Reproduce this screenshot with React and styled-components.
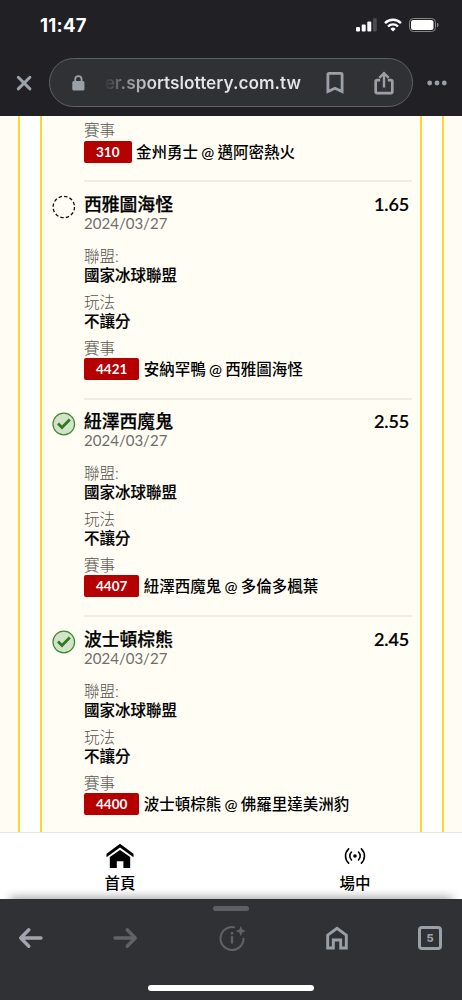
import React from "react";
import styled, { createGlobalStyle, css } from "styled-components";

const Global = createGlobalStyle`
  *, *::before, *::after { box-sizing: border-box; }
  html, body { margin: 0; padding: 0; }
  body {
    font-family: Lato, "Noto Sans CJK TC", sans-serif;
    background: #303134;
    color: #000;
  }
`;

const Screen = styled.div`
  width: 462px;
  height: 1000px;
  display: flex;
  flex-direction: column;
  overflow: hidden;
`;

const TopChrome = styled.header`
  height: 116px;
  flex: none;
  background: #202025;
  font-family: Inter, sans-serif;
`;

const StatusBar = styled.div`
  height: 50px;
  padding: 0 23px 0 40px;
  display: flex;
  align-items: center;
  justify-content: space-between;
`;

const Clock = styled.span`
  color: #fff;
  font-size: 18.5px;
  font-weight: 700;
  letter-spacing: 0.25px;
`;

const StatusIcons = styled.div`
  display: flex;
  align-items: center;
  gap: 7px;
`;

const AddressRow = styled.div`
  height: 66px;
  padding: 8px 14px 0 15px;
  display: flex;
  align-items: flex-start;
`;

const CloseSlot = styled.div`
  width: 34px;
  height: 49px;
  display: flex;
  align-items: center;
`;

const AddressPill = styled.div`
  width: 364px;
  height: 49px;
  border: 1px solid #606166;
  border-radius: 25px;
  background: #303134;
  display: flex;
  align-items: center;
  padding: 0 18px 0 22px;
`;

const Url = styled.span`
  width: 200px;
  margin-left: 17px;
  font-size: 17.3px;
  font-weight: 600;
  line-height: 24px;
  text-align: right;
  white-space: nowrap;
  color: transparent;
  background: linear-gradient(to right, #303134 0, #47484b 8px, #8b8c90 24px, #e2e4e8 56px);
  background-clip: text;
  -webkit-background-clip: text;
`;

const PillActions = styled.div`
  display: flex;
  align-items: center;
  margin-left: 25px;
  gap: 30px;
`;

const MoreSlot = styled.div`
  height: 49px;
  margin-left: 14px;
  display: flex;
  align-items: center;
`;

const Page = styled.main`
  height: 716px;
  flex: none;
  display: flex;
  background: #fff;
  overflow: hidden;
`;

const Gutter = styled.div`
  width: 20px;
  flex: none;
  background: #fffcf3;
  border: 0 solid #fdd630;
  border-width: ${(p) => (p.$right ? "0 0 0 2px" : "0 2px 0 0")};
`;

const Ticket = styled.section`
  width: 382px;
  margin: 0 20px;
  flex: none;
  background: #fffdf4;
  border: 0 solid #fdd630;
  border-width: 0 2px;
  padding-right: 8px;
`;

const Leg = styled.article`
  height: ${(p) => (p.$continued ? "64.3px" : "217.5px")};
  display: flex;
`;

const Marker = styled.div`
  width: 42px;
  flex: none;
  padding: 14.5px 0 0 10px;
`;

const LegBody = styled.div`
  flex: 1;
  border-top: ${(p) => (p.$continued ? "0" : "2px solid #efede6")};
  padding-top: ${(p) => (p.$continued ? "5px" : "11.5px")};
`;

const TitleRow = styled.div`
  display: flex;
  justify-content: space-between;
  height: 20px;
  line-height: 20px;
  padding-right: 3px;
`;

const Pick = styled.span`
  font-size: 17.8px;
  font-weight: 500;
  -webkit-text-stroke: 0.25px #000;
`;

const Odds = styled.span`
  font-size: 18px;
  font-weight: 600;
  letter-spacing: -0.15px;
  -webkit-text-stroke: 0.15px #000;
`;

const DateLine = styled.div`
  height: 18px;
  line-height: 18px;
  font-size: 15px;
  letter-spacing: 0.02px;
  color: #6f6e6b;
  margin-bottom: 15.2px;
`;

const Field = styled.div`
  margin-bottom: 8px;
`;

const fieldLine = css`
  height: 19px;
  line-height: 19px;
  font-size: 15.5px;
`;

const FieldLabel = styled.div`
  ${fieldLine}
  font-weight: 300;
  color: #55534f;
`;

const FieldValue = styled.div`
  ${fieldLine}
  font-weight: 500;
  -webkit-text-stroke: 0.15px #000;
`;

const MatchRow = styled.div`
  display: flex;
  align-items: center;
  height: 22px;
  line-height: 22px;
  margin-top: ${(p) => (p.$continued ? "0.7px" : "0")};
  font-size: 15.5px;
  font-weight: 500;
  white-space: nowrap;
  word-spacing: -0.7px;
`;

const Code = styled.span`
  height: 22px;
  padding: 0 12px;
  margin-right: 4.5px;
  border-radius: 2px;
  background: #b40000;
  color: #fff;
  font-size: 13.5px;
  font-weight: 700;
`;

const SiteNav = styled.nav`
  position: relative;
  height: 67px;
  flex: none;
  border-top: 1px solid #e6e5e4;
  background: #fff;
  display: grid;
  grid-template-columns: 240px 230px;

  &::after {
    content: "";
    position: absolute;
    left: 10px;
    right: 10px;
    bottom: -6px;
    height: 6px;
    box-shadow: 0 -1px 10px rgba(0, 0, 0, 0.5);
  }
`;

const SiteTab = styled.a`
  display: flex;
  flex-direction: column;
  align-items: center;
  font-size: 15.5px;
  font-weight: 500;
`;

const TabIcon = styled.div`
  height: 39px;
  padding-top: ${(p) => p.$drop || 0}px;
  svg { display: block; }
`;

const TabText = styled.span`
  line-height: 22px;
`;

const BottomChrome = styled.footer`
  position: relative;
  height: 101px;
  flex: none;
  background: #303134;
  font-family: Inter, sans-serif;
  display: flex;
  flex-direction: column;
  align-items: center;
`;

const Grabber = styled.div`
  width: 36px;
  height: 5px;
  margin-top: 7px;
  border-radius: 3px;
  background: #5d5f64;
`;

const ToolRow = styled.div`
  width: 462px;
  height: 53px;
  display: grid;
  grid-template-columns: 62px 126px 88px 122px 64px;
  align-items: center;
  justify-items: center;
`;

const TabCount = styled.div`
  width: 24px;
  height: 24px;
  border: 3px solid #9aa0a8;
  border-radius: 4px;
  color: #9aa0a8;
  font-size: 11px;
  font-weight: 800;
  display: flex;
  align-items: center;
  justify-content: center;
`;

const HomeIndicator = styled.div`
  width: 166px;
  height: 6px;
  margin-top: 21px;
  border-radius: 3px;
  background: #fff;
`;

const Signal = () => (
  <svg width="21" height="14" viewBox="0 0 21 14">
    <rect x="0" y="9" width="4" height="4.5" rx="1" fill="#fff" />
    <rect x="5.7" y="6.5" width="4" height="7" rx="1" fill="#fff" />
    <rect x="11.3" y="3.5" width="4" height="10" rx="1" fill="#fff" />
    <rect x="17" y="0.3" width="3.8" height="13.2" rx="1" fill="#4b4b50" />
  </svg>
);

const Wifi = () => (
  <svg width="18" height="14" viewBox="0 0 18 14" fill="none" stroke="#fff" strokeWidth="2.4">
    <path d="M1 5.1a11.3 11.3 0 0 1 16 0" />
    <path d="M4 8.5a7 7 0 0 1 10 0" />
    <path d="M9 13.5 6.4 10.9a3.7 3.7 0 0 1 5.2 0z" fill="#fff" stroke="none" />
  </svg>
);

const Battery = () => (
  <svg width="30" height="14" viewBox="0 0 30 14">
    <rect x="0.5" y="0.5" width="26" height="13" rx="4" fill="none" stroke="#86868a" />
    <rect x="2" y="2" width="22.5" height="10" rx="2.5" fill="#fff" />
    <path d="M28 4.8v4.4c1-.3 1.5-1.2 1.5-2.2s-.5-1.9-1.5-2.2z" fill="#86868a" />
  </svg>
);

const Close = () => (
  <svg width="18" height="18" viewBox="0 0 18 18" stroke="#9da1a9" strokeWidth="3" strokeLinecap="round">
    <path d="M3.3 3.3l11.6 11.6M14.9 3.3L3.3 14.9" />
  </svg>
);

const Lock = () => (
  <svg width="13" height="16" viewBox="0 0 13 16">
    <path d="M3.2 7V4.2a3.2 3.2 0 0 1 6.4 0V7" fill="none" stroke="#9aa0a8" strokeWidth="1.8" />
    <rect x="0.3" y="6" width="12.2" height="9.6" rx="1.6" fill="#9aa0a8" />
  </svg>
);

const Bookmark = () => (
  <svg width="18" height="24" viewBox="0 0 18 24" fill="none" stroke="#9aa0a8" strokeWidth="2.8">
    <path d="M1.9 20.6V3.4q0-1 1-1h12.2q1 0 1 1v17.2L9 17.3z" />
  </svg>
);

const Share = () => (
  <svg width="20" height="24" viewBox="0 0 20 24" fill="none" stroke="#9aa0a8" strokeWidth="2.7">
    <path d="M6.2 9.1H3.2q-1.5 0-1.5 1.5v10q0 1.5 1.5 1.5h13.6q1.5 0 1.5-1.5v-10q0-1.5-1.5-1.5h-3" />
    <path d="M10 16.5V3.5M5.3 6.8L10 2.2l4.7 4.6" strokeWidth="2.4" />
  </svg>
);

const More = () => (
  <svg width="20" height="6" viewBox="0 0 20 6" fill="#9aa0a8">
    <circle cx="2.7" cy="3" r="2.4" />
    <circle cx="10" cy="3" r="2.4" />
    <circle cx="17.3" cy="3" r="2.4" />
  </svg>
);

const Pending = () => (
  <svg width="24" height="24" viewBox="0 0 24 24">
    <circle cx="11.8" cy="12" r="10.7" fill="none" stroke="#111" strokeWidth="1.3" strokeDasharray="3.4 2.2" />
  </svg>
);

const Won = () => (
  <svg width="24" height="24" viewBox="0 0 24 24">
    <circle cx="11.8" cy="12" r="10.8" fill="#d3e3c8" stroke="#3f8536" strokeWidth="1.2" />
    <path d="M6 11.6l4 3.9 7.8-7.9" fill="none" stroke="#2c7b20" strokeWidth="2.8" />
  </svg>
);

const HomeSolid = () => (
  <svg width="28" height="26" viewBox="0 0 28 26">
    <path d="M.5 14.2V10.8L14 .8l13.5 10v3.4L14 4.6z" />
    <path d="M3.8 14L14 6.9 24.2 14v11h-6.8v-6.8h-6.6V25h-7z" />
  </svg>
);

const Live = () => (
  <svg width="22" height="18" viewBox="0 0 22 18" fill="none" stroke="#000" strokeWidth="1.6" strokeLinecap="round">
    <circle cx="11" cy="9" r="1.8" fill="#000" stroke="none" />
    <path d="M7.5 5a5.6 5.6 0 0 0 0 8M14.5 5a5.6 5.6 0 0 1 0 8" />
    <path d="M4.6 1.8a10 10 0 0 0 0 14.4M17.4 1.8a10 10 0 0 1 0 14.4" />
  </svg>
);

const Arrow = ({ forward }) => (
  <svg width="26" height="24" viewBox="0 0 26 24" fill="none" stroke={forward ? "#606267" : "#a1a6ae"} strokeWidth="3.4" strokeLinecap="round" strokeLinejoin="round">
    <path d={forward ? "M3 12h20M15.2 3.8L23.3 12l-8.1 8.2" : "M23 12H3M10.8 3.8L2.7 12l8.1 8.2"} />
  </svg>
);

const InfoSpark = () => (
  <svg width="28" height="28" viewBox="0 0 28 28" fill="none" stroke="#606267" strokeWidth="2">
    <path d="M17 3.4A11.5 11.5 0 1 0 25.5 14" />
    <path d="M14 12.2v7.3" strokeWidth="2.4" />
    <path d="M14 8v2.5" strokeWidth="2.4" />
    <path d="M22.8 2l1.5 3.5L27.8 7l-3.5 1.5-1.5 3.5-1.5-3.5L17.8 7l3.5-1.5z" fill="#606267" stroke="none" />
  </svg>
);

const HomeOutline = () => (
  <svg width="22" height="24" viewBox="0 0 22 24" fill="none" stroke="#9aa0a8" strokeWidth="2.9">
    <path d="M1.7 22V9.2L11 2.3l9.3 6.9V22h-5.6v-8H7.3v8z" />
  </svg>
);

const legs = [
  { code: "310", match: "金州勇士 @ 邁阿密熱火", continued: true },
  { code: "4421", match: "安納罕鴨 @ 西雅圖海怪", pick: "西雅圖海怪", odds: "1.65" },
  { code: "4407", match: "紐澤西魔鬼 @ 多倫多楓葉", pick: "紐澤西魔鬼", odds: "2.55", won: true },
  { code: "4400", match: "波士頓棕熊 @ 佛羅里達美洲豹", pick: "波士頓棕熊", odds: "2.45", won: true },
];

function BetLeg({ code, match, pick, odds, won, continued }) {
  return (
    <Leg $continued={continued}>
      <Marker>{!continued && (won ? <Won /> : <Pending />)}</Marker>
      <LegBody $continued={continued}>
        {!continued && (
          <>
            <TitleRow>
              <Pick>{pick}</Pick>
              <Odds>{odds}</Odds>
            </TitleRow>
            <DateLine>2024/03/27</DateLine>
            <Field>
              <FieldLabel>聯盟:</FieldLabel>
              <FieldValue>國家冰球聯盟</FieldValue>
            </Field>
            <Field>
              <FieldLabel>玩法</FieldLabel>
              <FieldValue>不讓分</FieldValue>
            </Field>
          </>
        )}
        <FieldLabel>賽事</FieldLabel>
        <MatchRow $continued={continued}>
          <Code>{code}</Code>
          {match}
        </MatchRow>
      </LegBody>
    </Leg>
  );
}

export default function App() {
  return (
    <>
      <Global />
      <Screen>
        <TopChrome>
          <StatusBar>
            <Clock>11:47</Clock>
            <StatusIcons>
              <Signal />
              <Wifi />
              <Battery />
            </StatusIcons>
          </StatusBar>
          <AddressRow>
            <CloseSlot><Close /></CloseSlot>
            <AddressPill>
              <Lock />
              <Url>er.sportslottery.com.tw</Url>
              <PillActions>
                <Bookmark />
                <Share />
              </PillActions>
            </AddressPill>
            <MoreSlot><More /></MoreSlot>
          </AddressRow>
        </TopChrome>
        <Page>
          <Gutter />
          <Ticket>
            {legs.map((leg) => <BetLeg key={leg.code} {...leg} />)}
          </Ticket>
          <Gutter $right />
        </Page>
        <SiteNav>
          <SiteTab>
            <TabIcon $drop={10}><HomeSolid /></TabIcon>
            <TabText>首頁</TabText>
          </SiteTab>
          <SiteTab>
            <TabIcon $drop={14}><Live /></TabIcon>
            <TabText>場中</TabText>
          </SiteTab>
        </SiteNav>
        <BottomChrome>
          <Grabber />
          <ToolRow>
            <Arrow />
            <Arrow forward />
            <InfoSpark />
            <HomeOutline />
            <TabCount>5</TabCount>
          </ToolRow>
          <HomeIndicator />
        </BottomChrome>
      </Screen>
    </>
  );
}
